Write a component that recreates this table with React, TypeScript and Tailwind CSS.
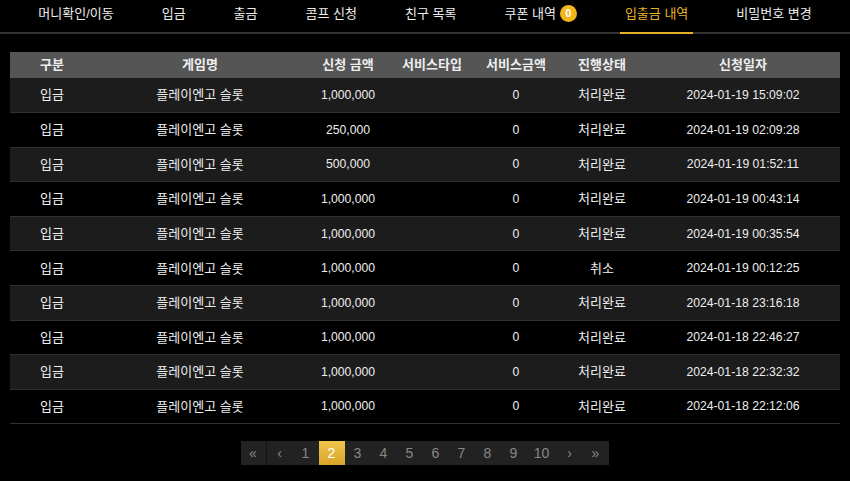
const tabs = ["머니확인/이동", "입금", "출금", "콤프 신청", "친구 목록", "쿠폰 내역", "입출금 내역", "비밀번호 변경"]

const rows = [
    {amount: "1,000,000", status: "처리완료", date: "2024-01-19 15:09:02"},
    {amount: "250,000", status: "처리완료", date: "2024-01-19 02:09:28"},
    {amount: "500,000", status: "처리완료", date: "2024-01-19 01:52:11"},
    {amount: "1,000,000", status: "처리완료", date: "2024-01-19 00:43:14"},
    {amount: "1,000,000", status: "처리완료", date: "2024-01-19 00:35:54"},
    {amount: "1,000,000", status: "취소", date: "2024-01-19 00:12:25"},
    {amount: "1,000,000", status: "처리완료", date: "2024-01-18 23:16:18"},
    {amount: "1,000,000", status: "처리완료", date: "2024-01-18 22:46:27"},
    {amount: "1,000,000", status: "처리완료", date: "2024-01-18 22:32:32"},
    {amount: "1,000,000", status: "처리완료", date: "2024-01-18 22:12:06"},
]

const pages = ["«", "‹", "1", "2", "3", "4", "5", "6", "7", "8", "9", "10", "›", "»"]

export default function App() {
    return (
        <div
            className="w-[850px] h-[481px] bg-black text-white text-[13px] overflow-hidden"
            style={{fontFamily: '"Liberation Sans", "Noto Sans CJK KR", sans-serif'}}
        >
            {/* Tabs */}
            <div className="h-[34px] border-b-2 border-[#333] flex justify-center gap-[38px]">
                {tabs.map((tab) => {
                    const active = tab === "입출금 내역"
                    return (
                        <div
                            key={tab}
                            className={`h-[34px] -mb-[2px] px-[5px] flex items-center gap-1 border-b-2 ${
                                active ? "border-[#e7b12a] text-[#e7b12a]" : "border-transparent text-[#eee]"
                            }`}
                        >
                            <span className="leading-none -mt-[5px]">{tab}</span>
                            {tab === "쿠폰 내역" && (
                                <span className="-mt-[5px] w-[17px] h-[17px] rounded-full bg-[#f2b61c] text-white text-[11px] font-bold flex items-center justify-center">
                                    0
                                </span>
                            )}
                        </div>
                    )
                })}
            </div>

            {/* Table */}
            <div className="px-[10px] pt-[18px]">
                <table className="w-full border-collapse table-fixed">
                    <colgroup>
                        <col className="w-[84px]"/>
                        <col className="w-[212px]"/>
                        <col className="w-[84px]"/>
                        <col className="w-[84px]"/>
                        <col className="w-[84px]"/>
                        <col className="w-[88px]"/>
                        <col/>
                    </colgroup>
                    <thead>
                    <tr className="bg-[#555] h-[26px] font-bold text-[#eee]">
                        <th>구분</th>
                        <th>게임명</th>
                        <th>신청 금액</th>
                        <th>서비스타입</th>
                        <th>서비스금액</th>
                        <th>진행상태</th>
                        <th>신청일자</th>
                    </tr>
                    </thead>
                    <tbody>
                    {rows.map((row, i) => (
                        <tr
                            key={i}
                            className={`h-[34.6px] text-center text-[#eee] border-b border-[#303030] ${
                                i % 2 === 0 ? "bg-[#1c1c1c]" : "bg-black"
                            }`}
                        >
                            <td>입금</td>
                            <td>플레이엔고 슬롯</td>
                            <td className="text-[12.2px]">{row.amount}</td>
                            <td></td>
                            <td className="text-[12.2px]">0</td>
                            <td>{row.status}</td>
                            <td className="text-[12.2px]">{row.date}</td>
                        </tr>
                    ))}
                    </tbody>
                </table>
            </div>

            {/* Pagination */}
            <div className="flex justify-center mt-[17px] ml-[-1px]">
                <div className="flex h-[24px] bg-[#222]">
                    {pages.map((p, i) => (
                        <div
                            key={i}
                            className={`h-[24px] flex items-center justify-center text-[14px] ${
                                p === "10" ? "w-[30px]" : "w-[26px]"
                            } ${
                                p === "2"
                                    ? "bg-gradient-to-b from-[#f0c44c] to-[#d9a52a] text-white"
                                    : "text-[#888]"
                            } ${i === 0 ? "border-r border-[#111]" : ""}`}
                        >
                            {p}
                        </div>
                    ))}
                </div>
            </div>
        </div>
    )
}
